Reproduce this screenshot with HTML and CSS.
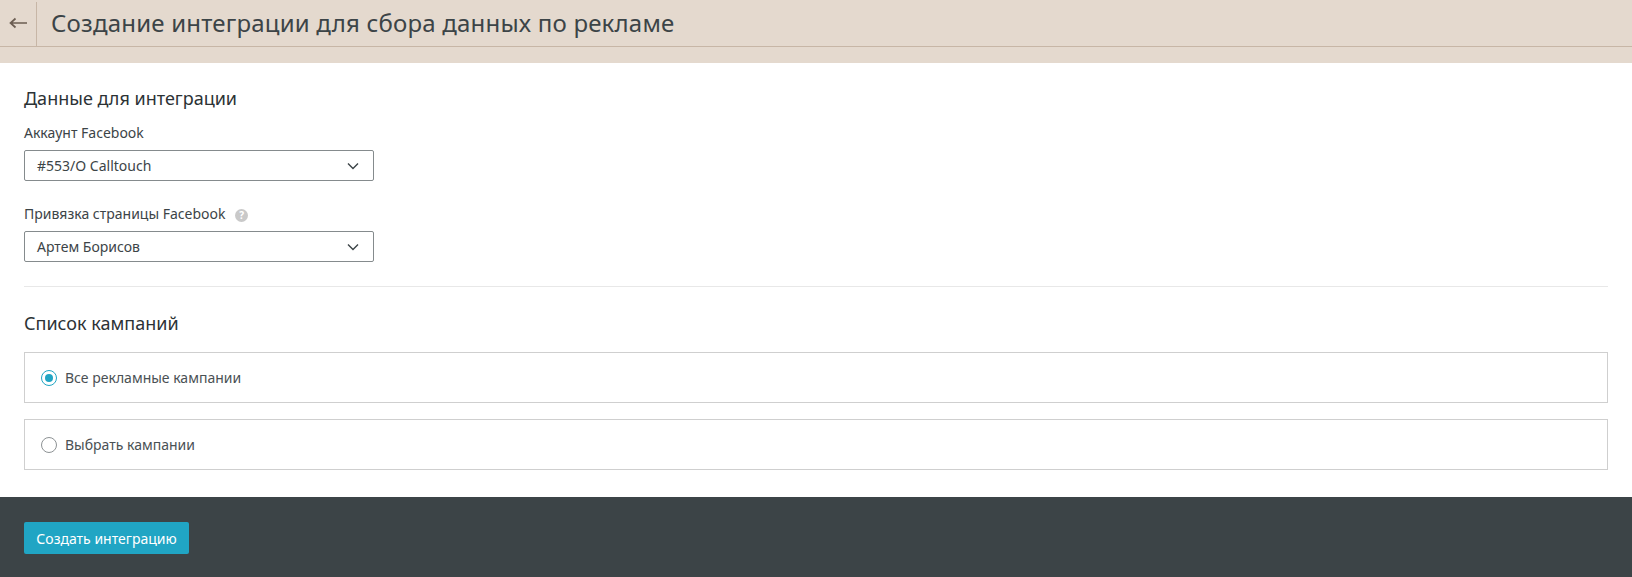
FILE: index.html
```html
<!DOCTYPE html>
<html lang="ru">
<head>
<meta charset="utf-8">
<title>Создание интеграции</title>
<link rel="stylesheet" href="styles.css">
</head>
<body>
<header class="header">
  <div class="header-bar">
    <a class="back" aria-label="Назад">
      <svg width="18" height="12" viewBox="0 0 18 12"><path d="M18 6H1.5M6.5 1.5 1.5 6l5 4.500" fill="none" stroke="#6b5d52" stroke-width="1.7"/></svg>
    </a>
    <h1 class="title">Создание интеграции для сбора данных по рекламе</h1>
  </div>
</header>
<main class="content">
  <h2 class="section-title">Данные для интеграции</h2>
  <div class="field">
    <label class="label">Аккаунт Facebook</label>
    <div class="select"><span>#553/O Calltouch</span>
      <svg class="chevron" width="12" height="8" viewBox="0 0 12 8"><path d="M1 1.500 6 6.500l5-5" fill="none" stroke="#3c4447" stroke-width="1.400"/></svg>
    </div>
  </div>
  <div class="field field-second">
    <label class="label">Привязка страницы Facebook <span class="help">?</span></label>
    <div class="select"><span>Артем Борисов</span>
      <svg class="chevron" width="12" height="8" viewBox="0 0 12 8"><path d="M1 1.500 6 6.500l5-5" fill="none" stroke="#3c4447" stroke-width="1.400"/></svg>
    </div>
  </div>
  <hr class="divider">
  <h2 class="section-title section-campaigns">Список кампаний</h2>
  <div class="option"><span class="radio radio-on"></span><span>Все рекламные кампании</span></div>
  <div class="option option-second"><span class="radio"></span><span>Выбрать кампании</span></div>
</main>
<footer class="footer">
  <button class="primary">Создать интеграцию</button>
</footer>
</body>
</html>
```
FILE: styles.css
```css
* { box-sizing: border-box; }
html, body { margin: 0; height: 100%; }
body {
  background: #fff;
  color: #3c4447;
  font-family: "Noto Sans", "Open Sans", sans-serif;
  overflow: hidden;
}
.header { background: #e4d9ce; height: 63px; }
.header-bar {
  height: 47px;
  padding-top: 2px;
  border-bottom: 1px solid #c7b6a6;
  display: flex;
}
.back {
  width: 37px;
  border-right: 1px solid #c7b6a6;
  display: flex;
  align-items: center;
  padding-left: 9px;
  padding-bottom: 2px;
}
.title {
  margin: 0 0 0 14px;
  font-size: 24px;
  font-weight: 400;
  line-height: 42px;
  letter-spacing: 0.2px;
  color: #3c4447;
}
.content { padding: 23px 24px 0; height: 434px; }
.section-title {
  margin: 0;
  font-size: 18px;
  font-weight: 400;
  line-height: 24px;
  color: #2c3235;
}
.field { margin-top: 14px; }
.field-second { margin-top: 24px; }
.label {
  display: block;
  font-size: 14px;
  line-height: 18px;
  margin-bottom: 8px;
  color: #3c4447;
}
.help {
  display: inline-block;
  width: 13px;
  height: 13px;
  margin-left: 6px;
  border-radius: 50%;
  background: #c9c9c9;
  color: #fff;
  font-size: 10px;
  font-weight: 700;
  line-height: 13px;
  text-align: center;
  vertical-align: 0;
}
.select {
  width: 350px;
  height: 31px;
  border: 1px solid #858b8d;
  border-radius: 2px;
  padding: 0 14px 0 12px;
  display: flex;
  align-items: center;
  justify-content: space-between;
  font-size: 14px;
  color: #3c4447;
}
.divider {
  margin: 24px 0 0;
  border: 0;
  border-top: 1px solid #e8e8e8;
}
.section-campaigns { margin-top: 24px; }
.option {
  height: 51px;
  margin-top: 17px;
  border: 1px solid #cfcfcf;
  display: flex;
  align-items: center;
  padding-left: 16px;
  gap: 8px;
  font-size: 14px;
  color: #4a5154;
}
.option-second { margin-top: 16px; }
.radio {
  width: 16px;
  height: 16px;
  border: 1px solid #8d9294;
  border-radius: 50%;
  background: #fff;
  display: flex;
  align-items: center;
  justify-content: center;
}
.radio-on { border-color: #20a5c4; }
.radio-on::after {
  content: "";
  width: 8px;
  height: 8px;
  border-radius: 50%;
  background: #20a5c4;
}
.footer {
  background: #3c4447;
  height: 80px;
  padding: 25px 24px 0;
}
.primary {
  display: block;
  width: 165px;
  height: 32px;
  border: 0;
  border-radius: 2px;
  background: #20a5c4;
  color: #fff;
  font-family: inherit;
  font-size: 14px;
  padding: 0;
}
```
